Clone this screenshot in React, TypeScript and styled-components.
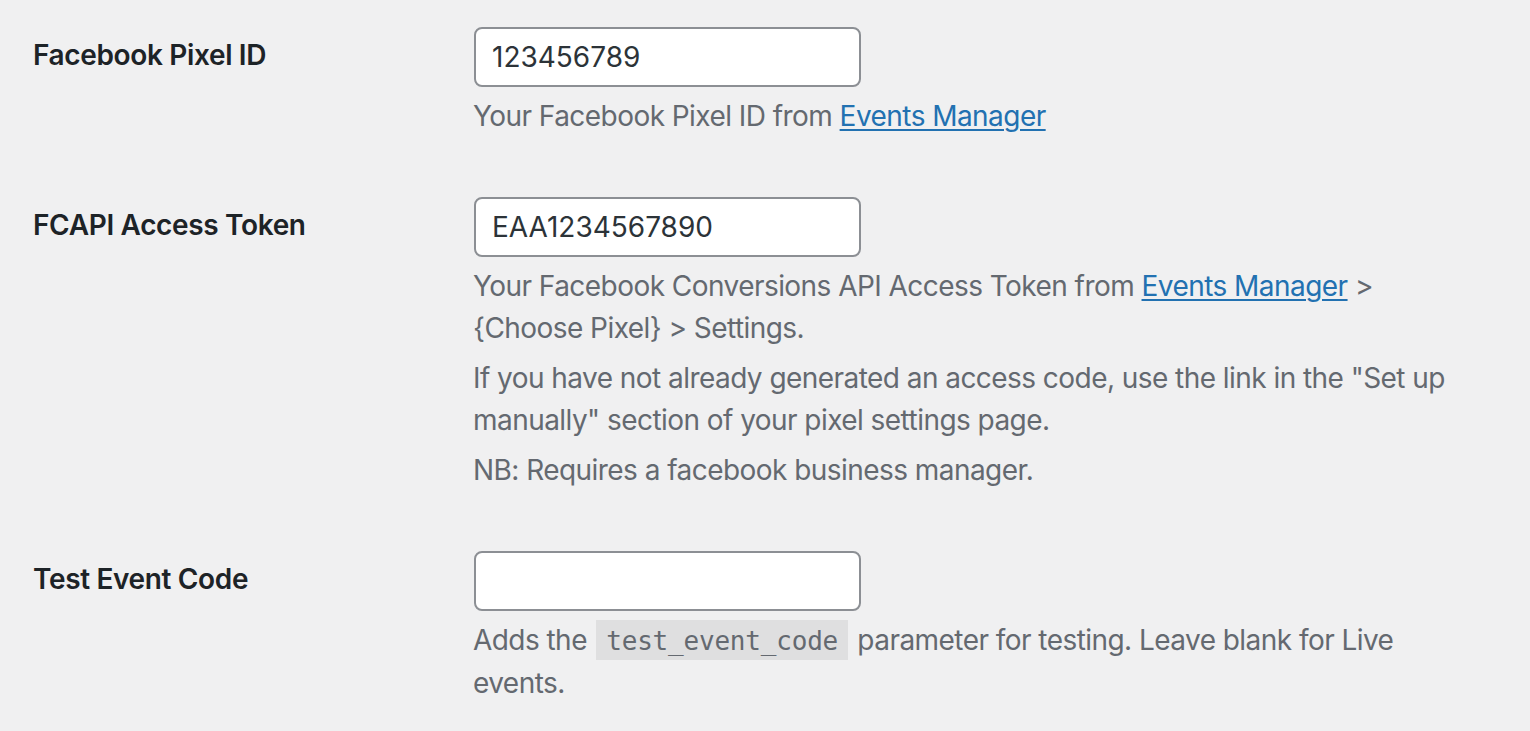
import React from "react";
import styled, { createGlobalStyle } from "styled-components";

const Global = createGlobalStyle`
  html, body { margin: 0; padding: 0; background: #f0f0f1; }
  body {
    font-family: Inter, "Noto Sans", "Liberation Sans", sans-serif;
    color: #3c434a;
    -webkit-font-smoothing: antialiased;
  }
`;

const Page = styled.div`
  width: 1530px;
  height: 731px;
  overflow: hidden;
  background: #f0f0f1;
`;

const Table = styled.div`
  margin-top: -3px;
  padding-left: 33px;
  display: flex;
  flex-direction: column;
`;

const Row = styled.div`
  display: grid;
  grid-template-columns: 440px 1fr;
`;

const Label = styled.div`
  padding: 40px 20px 40px 0;
  font-size: 28px;
  line-height: 36.4px;
  font-weight: 600;
  letter-spacing: -0.35px;
  color: #1d2327;
`;

const Field = styled.div`
  padding: 30px 0;
  width: 1010px;
`;

const Input = styled.input`
  box-sizing: border-box;
  display: block;
  width: 387px;
  height: 60px;
  margin: 0 0 0 1px;
  padding: 0 16px;
  border: 2px solid #8c8f94;
  border-radius: 8px;
  background: #fff;
  color: #2c3338;
  font-family: inherit;
  font-size: 28px;
  outline: none;
`;

const Desc = styled.p`
  margin: 8px 0 0;
  font-size: 28px;
  line-height: 42px;
  letter-spacing: -0.55px;
  color: #646970;
`;

const Link = styled.a`
  color: #2271b1;
  text-decoration: underline;
  text-underline-offset: 3px;
  text-decoration-thickness: 2px;
`;

const Code = styled.code`
  padding: 6px 10px 4px;
  margin: 0 2px;
  background: rgba(0, 0, 0, 0.07);
  font-family: "DejaVu Sans Mono", "Liberation Mono", monospace;
  font-size: 26px;
  letter-spacing: -0.2px;
  color: #646970;
`;

export default function App() {
  return (
    <Page>
      <Global />
      <Table>
        <Row>
          <Label>Facebook Pixel ID</Label>
          <Field>
            <Input defaultValue="123456789" />
            <Desc>
              Your Facebook Pixel ID from <Link href="#">Events Manager</Link>
            </Desc>
          </Field>
        </Row>
        <Row>
          <Label>FCAPI Access Token</Label>
          <Field>
            <Input defaultValue="EAA1234567890" />
            <Desc>
              Your Facebook Conversions API Access Token from{" "}
              <Link href="#">Events Manager</Link> &gt; {"{Choose Pixel}"} &gt; Settings.
            </Desc>
            <Desc>
              If you have not already generated an access code, use the link in the "Set up
              manually" section of your pixel settings page.
            </Desc>
            <Desc>NB: Requires a facebook business manager.</Desc>
          </Field>
        </Row>
        <Row>
          <Label>Test Event Code</Label>
          <Field>
            <Input defaultValue="" />
            <Desc>
              Adds the <Code>test_event_code</Code> parameter for testing. Leave blank for Live
              events.
            </Desc>
          </Field>
        </Row>
      </Table>
    </Page>
  );
}
